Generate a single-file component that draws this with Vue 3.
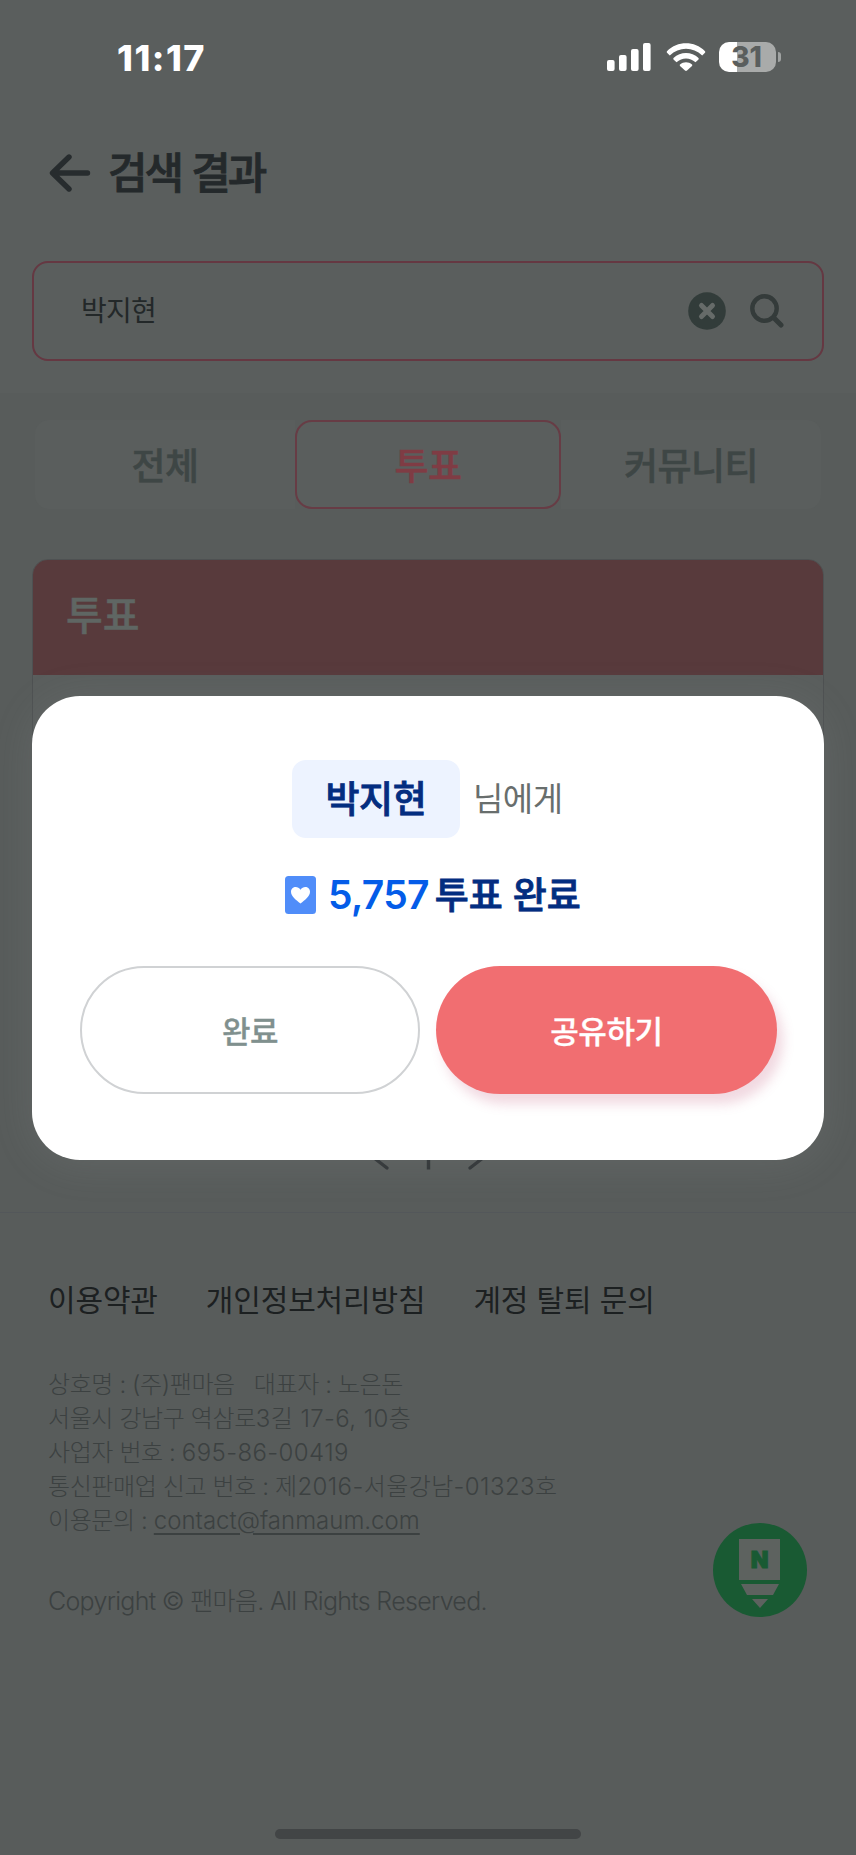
<script setup>
const tabs = [
  { label: '전체', active: false },
  { label: '투표', active: true },
  { label: '커뮤니티', active: false },
]
const links = ['이용약관', '개인정보처리방침', '계정 탈퇴 문의']
</script>

<template>
  <div class="screen">
    <div class="status">
      <span class="time">11:17</span>
      <div class="indicators">
        <svg class="signal" width="44" height="28" viewBox="0 0 44 28" fill="#fff">
          <rect x="0" y="17" width="7.6" height="11" rx="2" />
          <rect x="12" y="12" width="7.6" height="16" rx="2" />
          <rect x="24" y="6" width="7.6" height="22" rx="2" />
          <rect x="36" y="0" width="7.6" height="28" rx="2" />
        </svg>
        <svg class="wifi" width="40" height="28" viewBox="0 0 40 28" fill="#fff">
          <path d="M1 8.2C11.5-2.3 28.500-2.300 39 8.200Q39.600 9 39 9.700L36.200 12.400C27 3.500 13 3.500 3.800 12.400L1 9.700Q.4 9 1 8.200Z" />
          <path d="M7.500 15C14.500 8.300 25.500 8.300 32.500 15Q33 15.700 32.500 16.400L29.500 19.300C24 14.200 16 14.200 10.500 19.300L7.500 16.400Q7 15.700 7.500 15Z" />
          <path d="M14 21.600C17.500 18.600 22.500 18.600 26 21.600Q26.500 22.300 26 23L21 27.600Q20 28.400 19 27.600L14 23Q13.500 22.300 14 21.600Z" />
        </svg>
        <div class="battery">
          <span class="level">31</span>
          <i class="cap"></i>
        </div>
      </div>
    </div>

    <header class="head">
      <svg width="42" height="38" viewBox="0 0 42 38" fill="none" stroke="#272c2e" stroke-width="5.400" stroke-linecap="round" stroke-linejoin="round">
        <path d="M38.500 19H4M20 3L3.500 19L20 35" />
      </svg>
      <h1>검색 결과</h1>
    </header>

    <div class="search-wrap">
      <div class="search">
        <span class="query">박지현</span>
        <svg class="clear" width="38" height="38" viewBox="0 0 38 38">
          <circle cx="19" cy="19" r="18.800" fill="#323c3a" />
          <path d="M13.500 13.500L24.500 24.500M24.500 13.500L13.500 24.500" stroke="#666b69" stroke-width="5" stroke-linecap="round" />
        </svg>
        <svg class="lens" width="34" height="34" viewBox="0 0 34 34" fill="none" stroke="#343b3a" stroke-linecap="round">
          <circle cx="14.500" cy="14.500" r="12.200" stroke-width="4.400" />
          <path d="M24 24L31 31" stroke-width="5" />
        </svg>
      </div>
    </div>

    <main class="content">
      <nav class="tabs">
        <div v-for="t in tabs" :key="t.label" class="tab" :class="{ active: t.active }">{{ t.label }}</div>
      </nav>
      <section class="card">
        <h2>투표</h2>
        <div class="card-body"></div>
      </section>
      <div class="pager">
        <svg width="112" height="30" viewBox="0 0 112 30" fill="none" stroke="#303436" stroke-width="3.400" stroke-linecap="round">
          <path d="M15 28L-1 15.500L15 3M98 28L114 15.500L98 3" />
          <path d="M56.500 3V29.500" stroke-linecap="butt" />
        </svg>
      </div>
    </main>

    <footer class="foot">
      <div class="links"><a v-for="l in links" :key="l">{{ l }}</a></div>
      <div class="info">
        <p>상호명 : (주)팬마음 &nbsp; 대표자 : 노은돈</p>
        <p>서울시 강남구 역삼로<span class="num">3길 17-6, 10층</span></p>
        <p>사업자 번호 : <span class="num">695-86-00419</span></p>
        <p>통신판매업 신고 번호 : <span class="num">제2016-서울강남-01323호</span></p>
        <p>이용문의 : <u>contact@fanmaum.com</u></p>
      </div>
      <p class="copy">Copyright © 팬마음. All Rights Reserved.</p>
    </footer>

    <div class="fab">
      <svg width="94" height="94" viewBox="0 0 94 94">
        <circle cx="47" cy="47" r="47" fill="#195a33" />
        <path d="M26 16H67V57H26ZM28 61H66L60 72H34ZM39 76H55L47 85Z" fill="#5d625f" />
        <text x="46.500" y="44.500" text-anchor="middle" class="fab-letter">N</text>
      </svg>
    </div>

    <div class="modal">
      <div class="who">
        <strong>박지현</strong>
        <span>님에게</span>
      </div>
      <div class="votes">
        <svg width="31" height="38" viewBox="0 0 31 38">
          <rect width="31" height="38" rx="3.500" fill="#508df9" />
          <path d="M15.500 27.500C11 24 6 20.500 6 15.800C6 10.500 12.700 9.200 15.500 13.800C18.300 9.200 25 10.500 25 15.800C25 20.500 20 24 15.500 27.500Z" fill="#fff" />
        </svg>
        <b class="count">5,757</b>
        <b class="done">투표 완료</b>
      </div>
      <div class="actions">
        <button class="plain">완료</button>
        <button class="share">공유하기</button>
      </div>
    </div>

    <div class="home"></div>
  </div>
</template>

<style>
html, body { margin: 0; background: #5a5e5d; }
</style>

<style scoped>
* { box-sizing: border-box; margin: 0; }
.screen {
  position: relative;
  width: 856px;
  height: 1855px;
  overflow: hidden;
  background: #5a5e5d;
  font-family: Inter, "Noto Sans CJK KR", sans-serif;
}
.status {
  height: 116px;
  display: flex;
  justify-content: space-between;
  padding: 36px 73px 0 117px;
}
.time { font-size: 36px; line-height: 44px; font-weight: 800; color: #fff; letter-spacing: 1.500px; }
.indicators { display: flex; align-items: flex-start; padding-top: 7px; }
.wifi { margin-left: 15px; }
.battery {
  position: relative;
  width: 57px;
  height: 30px;
  margin: -1px 7px 0 13px;
  border-radius: 10px;
  background: linear-gradient(90deg, #fff 18px, #a9abaa 18px);
  text-align: center;
}
.level { display: block; margin-left: -2px; font-size: 28px; line-height: 31px; font-weight: 800; color: #5a5e5d; letter-spacing: 0; }
.cap { position: absolute; left: 59px; top: 10px; width: 3px; height: 10px; border-radius: 0 4px 4px 0; background: #a0a3a2; }
.head { height: 145px; display: flex; align-items: flex-start; padding: 38px 0 0 49px; }
h1 { margin-left: 17px; margin-top: -11px; font-size: 43px; line-height: 60px; font-weight: 500; -webkit-text-stroke: 0.8px; color: #24292b; letter-spacing: -3.100px; word-spacing: 2px; }
.search-wrap { height: 132px; padding: 0 32px; }
.search {
  height: 100px;
  border: 2px solid #653842;
  border-radius: 16px;
  display: flex;
  align-items: center;
  padding: 0 38px 0 47px;
}
.query { flex: 1; font-size: 28px; line-height: 40px; color: #232829; letter-spacing: -0.8px; }
.lens { margin-left: 24px; }
.content { height: 820px; background: #585c5b; border-bottom: 1px solid #53575a; padding-top: 27px; }
.tabs { display: grid; grid-template-columns: 260px 266px 260px; margin-left: 35px; height: 89px; }
.tab { display: flex; align-items: center; justify-content: center; padding-bottom: 1px; background: #5a5e5d; font-size: 37px; font-weight: 500; -webkit-text-stroke: 0.500px; letter-spacing: -0.500px; color: #3e4645; }
.tab:first-child { border-radius: 14px 0 0 14px; }
.tab:last-child { border-radius: 0 14px 14px 0; }
.active { border: 2px solid #673c45; border-radius: 17px; color: #7f3c44; }
.card { margin: 50px 32px 0; border: 1px solid #4e5152; border-radius: 16px; overflow: hidden; background: #5a5e5d; }
h2 { height: 115px; padding-left: 33px; line-height: 112px; font-size: 40px; font-weight: 500; -webkit-text-stroke: 0.500px; color: #5f6663; letter-spacing: 0; background: #583a3c; }
.card-body { height: 430px; }
.pager { display: flex; justify-content: center; margin-top: 34px; }
.pager svg { overflow: visible; }
.foot { padding: 65px 48px 0; height: 642px; background: #585c5b; }
.links { display: flex; gap: 48px; font-size: 30px; line-height: 44px; color: #1c2021; letter-spacing: -0.150px; }
.info { margin-top: 46px; font-size: 24px; line-height: 34px; font-weight: 300; color: #3c4141; letter-spacing: -0.400px; }
.info p, .copy { white-space: pre; }
.num { letter-spacing: 0.400px; }
.info u { text-decoration-thickness: 2px; text-underline-offset: 4px; letter-spacing: 0; }
.copy { margin-top: 46px; font-size: 25px; line-height: 34px; font-weight: 300; color: #3c4141; letter-spacing: -0.700px; }
.fab { position: absolute; left: 713px; top: 1523px; }
.fab svg { display: block; }
.fab-letter { font-size: 23px; font-weight: 900; fill: #195a33; stroke: #195a33; stroke-width: 1px; }
.modal {
  position: absolute;
  left: 32px;
  top: 696px;
  width: 792px;
  height: 464px;
  border-radius: 48px;
  background: #fff;
  box-shadow: 0 4px 40px rgba(150, 155, 155, 0.16);
  padding: 64px 47px 0 48px;
}
.who { display: flex; align-items: center; height: 78px; margin-left: 212px; }
.who strong { width: 168px; height: 78px; line-height: 79px; border-radius: 14px; background: #edf3ff; color: #032d80; font-size: 37px; font-weight: 500; -webkit-text-stroke: 0.800px; letter-spacing: -0.300px; text-align: center; }
.who span { margin-left: 13px; font-size: 33px; color: #686e6d; letter-spacing: -0.500px; line-height: 79px; }
.votes { display: flex; align-items: center; height: 60px; margin: 27px 0 0 205px; }
.count { margin-left: 12px; font-size: 39px; line-height: 60px; font-weight: 600; color: #045ce8; letter-spacing: -0.700px; padding-bottom: 1px; }
.done { margin-left: 6px; font-size: 37px; line-height: 60px; font-weight: 500; -webkit-text-stroke: 0.800px; color: #032d80; letter-spacing: 0; padding-top: 2px; }
.actions { display: flex; gap: 16px; margin-top: 41px; }
button { flex: none; height: 128px; padding: 0 0 2px; border-radius: 64px; font-family: inherit; font-size: 31px; font-weight: 500; -webkit-text-stroke: 0.300px; letter-spacing: -0.400px; }
.plain { width: 340px; border: 2px solid #d0d2d4; background: #fff; color: #80908e; }
.share { width: 341px; border: 0; background: #f16e71; color: #fff; box-shadow: 6px 10px 12px rgba(190, 80, 120, 0.22); }
.home { position: absolute; left: 275px; top: 1829px; width: 306px; height: 10px; border-radius: 5px; background: #424546; }
</style>
